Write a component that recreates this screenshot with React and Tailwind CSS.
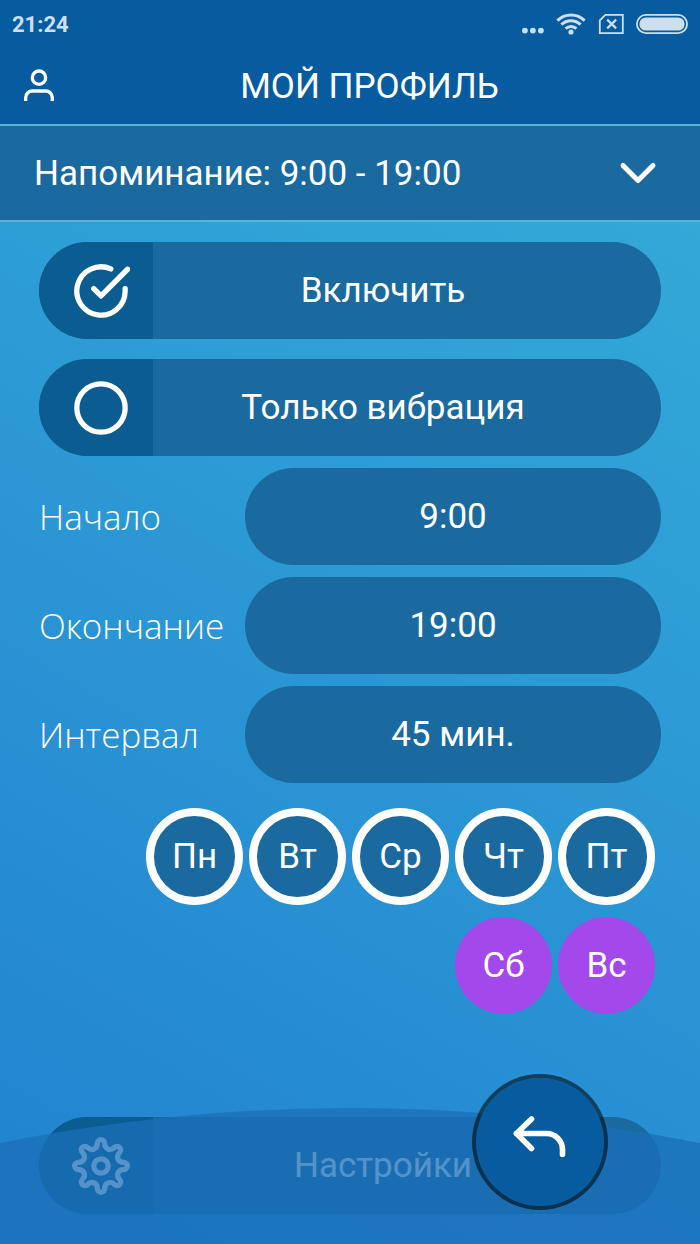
import React, { useState } from "react";

const FIELDS = [
  { id: "start", label: "Начало", value: "9:00" },
  { id: "end", label: "Окончание", value: "19:00" },
  { id: "interval", label: "Интервал", value: "45 мин." },
];

const DAY_ROWS = [
  ["Пн", "Вт", "Ср", "Чт", "Пт"],
  ["Сб", "Вс"],
];

function StatusBar() {
  return (
    <div className="flex h-12 items-center justify-between px-3 text-[#cddfec]">
      <span className="text-[22px] font-bold">21:24</span>
      <div className="flex items-center gap-3">
        <svg width="22" height="22" viewBox="0 0 22 22" fill="currentColor">
          <circle cx="2.9" cy="17.6" r="2.9" />
          <circle cx="10.9" cy="17.6" r="2.9" />
          <circle cx="18.9" cy="17.6" r="2.9" />
        </svg>
        <svg
          width="30"
          height="22"
          viewBox="0 0 30 22"
          fill="none"
          stroke="currentColor"
          strokeWidth="3"
        >
          <path d="M1.4 7.6a19.2 19.2 0 0 1 27.2 0" />
          <path d="M5.4 11.6a13.6 13.6 0 0 1 19.2 0" />
          <path d="M9.6 15.6a7.7 7.7 0 0 1 10.8 0" />
          <circle cx="15" cy="19" r="2.6" fill="currentColor" stroke="none" />
        </svg>
        <svg
          width="26"
          height="22"
          viewBox="0 0 26 22"
          fill="none"
          stroke="currentColor"
          strokeWidth="1.8"
        >
          <path d="M7.4 1.8h17.4v18.4h-23V7.4z" />
          <path d="m9.2 6.6 9 8.8m0-8.8-9 8.8" strokeWidth="2.2" />
        </svg>
        <svg width="52" height="20" viewBox="0 0 52 20">
          <rect
            x="0.9"
            y="0.9"
            width="50.2"
            height="18.2"
            rx="9.1"
            fill="none"
            stroke="currentColor"
            strokeWidth="1.8"
          />
          <rect x="3.4" y="3.4" width="45.2" height="13.2" rx="6.6" fill="currentColor" />
        </svg>
      </div>
    </div>
  );
}

function LineIcon({ className, strokeWidth = 2, children }) {
  return (
    <svg
      className={className}
      viewBox="0 0 24 24"
      fill="none"
      stroke="currentColor"
      strokeWidth={strokeWidth}
      strokeLinecap="round"
      strokeLinejoin="round"
      aria-hidden="true"
    >
      {children}
    </svg>
  );
}

// one tooth of the gear, repeated around the centre
const TOOTH = "M-3.6-22.7a3.6 3.6 0 0 1 7.2 0c0 5.7 5.7 8.3 9.9 4.1";

function GearIcon({ className }) {
  return (
    <svg
      className={className}
      viewBox="-29 -29 58 58"
      fill="none"
      stroke="currentColor"
      strokeWidth="5.2"
      strokeLinecap="round"
      aria-hidden="true"
    >
      <circle r="7.2" />
      {[0, 45, 90, 135, 180, 225, 270, 315].map((angle) => (
        <path key={angle} d={TOOTH} transform={`rotate(${angle})`} />
      ))}
    </svg>
  );
}

function Toggle({ id, label, checked, onChange }) {
  return (
    <label
      htmlFor={id}
      className="relative flex h-[97px] cursor-pointer overflow-hidden rounded-full bg-[#1a6a9f]"
    >
      <input
        id={id}
        type="checkbox"
        checked={checked}
        onChange={(e) => onChange(e.target.checked)}
        className="sr-only"
      />
      <span className="flex w-[114px] items-center bg-[#0b5c90] pl-[33px]">
        <LineIcon className="size-[58px]" strokeWidth={2.2}>
          {checked ? (
            <>
              <path d="M22 11.07V12a10 10 0 1 1-5.93-9.14" />
              <path d="M23 3 12 14l-3-3" />
            </>
          ) : (
            <circle cx="12" cy="12" r="10" />
          )}
        </LineIcon>
      </span>
      <span className="flex flex-1 items-center justify-center pr-12">{label}</span>
    </label>
  );
}

function App() {
  const [enabled, setEnabled] = useState(true);
  const [vibrate, setVibrate] = useState(false);
  const [days, setDays] = useState(DAY_ROWS[0]);

  const toggleDay = (day) => {
    setDays(days.includes(day) ? days.filter((d) => d !== day) : [...days, day]);
  };

  return (
    <div className="relative flex min-h-screen flex-col bg-linear-[30deg,#2182d0,#36afd9] font-['Roboto',sans-serif] text-[35px] leading-[43px] text-white">
      <header className="bg-[#075c9f]">
        <StatusBar />
        <div className="flex h-[76px] items-center pr-10 pl-[19px]">
          <button aria-label="Профиль">
            <LineIcon className="size-10">
              <path d="M20 21v-2a4 4 0 0 0-4-4H8a4 4 0 0 0-4 4v2" strokeLinecap="butt" />
              <circle cx="12" cy="7" r="4" />
            </LineIcon>
          </button>
          <h1 className="flex-1 pl-5 text-center">МОЙ ПРОФИЛЬ</h1>
        </div>
      </header>

      <button className="flex h-[98px] items-center justify-between border-y-2 border-[#5cb3d8] bg-[#1a6a9f] pr-8 pl-[34px]">
        <span>Напоминание: 9:00 - 19:00</span>
        <LineIcon className="size-[60px]">
          <path d="m6 9 6 6 6-6" />
        </LineIcon>
      </button>

      <main className="flex flex-1 flex-col px-[39px] pt-5 pb-[30px]">
        <div className="flex flex-col gap-5">
          <Toggle id="enabled" label="Включить" checked={enabled} onChange={setEnabled} />
          <Toggle id="vibrate" label="Только вибрация" checked={vibrate} onChange={setVibrate} />
        </div>

        <div className="mt-3 flex flex-col gap-3">
          {FIELDS.map((field) => (
            <div key={field.id} className="flex items-center">
              <label
                htmlFor={field.id}
                className="w-[206px] font-['Open_Sans',sans-serif] font-light"
              >
                {field.label}
              </label>
              <button id={field.id} className="h-[97px] flex-1 rounded-full bg-[#1a6a9f]">
                {field.value}
              </button>
            </div>
          ))}
        </div>

        <div className="mt-[25px] mb-10 flex flex-col gap-3 pr-1.5">
          {DAY_ROWS.map((row) => (
            <div key={row[0]} className="flex justify-end gap-1.5">
              {row.map((day) => (
                <button
                  key={day}
                  aria-pressed={days.includes(day)}
                  onClick={() => toggleDay(day)}
                  className={
                    days.includes(day)
                      ? "size-[97px] rounded-full border-8 border-white bg-[#1a6a9f]"
                      : "size-[97px] rounded-full bg-[#a348ea]"
                  }
                >
                  {day}
                </button>
              ))}
            </div>
          ))}
        </div>

        <button className="mt-auto flex h-[97px] overflow-hidden rounded-full bg-[#1a6a9f]">
          <span className="flex h-full w-[114px] items-center bg-[#0b5c90] pl-[33px]">
            <GearIcon className="size-[58px]" />
          </span>
          <span className="flex h-full flex-1 items-center justify-center pr-12">Настройки</span>
        </button>
      </main>

      {/* translucent hill that dims the bottom of the page */}
      <svg
        className="pointer-events-none absolute inset-x-0 bottom-0 h-[136px] w-full"
        viewBox="0 0 700 136"
        preserveAspectRatio="none"
      >
        <path d="M0 35Q350-35 700 35V136H0Z" fill="#1b6fb8" fillOpacity="0.75" />
      </svg>

      <button
        aria-label="Назад"
        className="absolute right-[92px] bottom-[34px] flex size-[136px] items-center justify-center rounded-full border-4 border-black/55 bg-[#075c9f] bg-clip-padding"
      >
        <svg
          width="60"
          height="60"
          viewBox="0 0 60 60"
          fill="none"
          stroke="currentColor"
          strokeWidth="5.6"
          strokeLinecap="round"
          strokeLinejoin="round"
        >
          <path d="m21.5 7-15 14.5 15 15" />
          <path d="M6.5 21.5h30a16 16 0 0 1 16 16v5" />
        </svg>
      </button>
    </div>
  );
}

export default App;
